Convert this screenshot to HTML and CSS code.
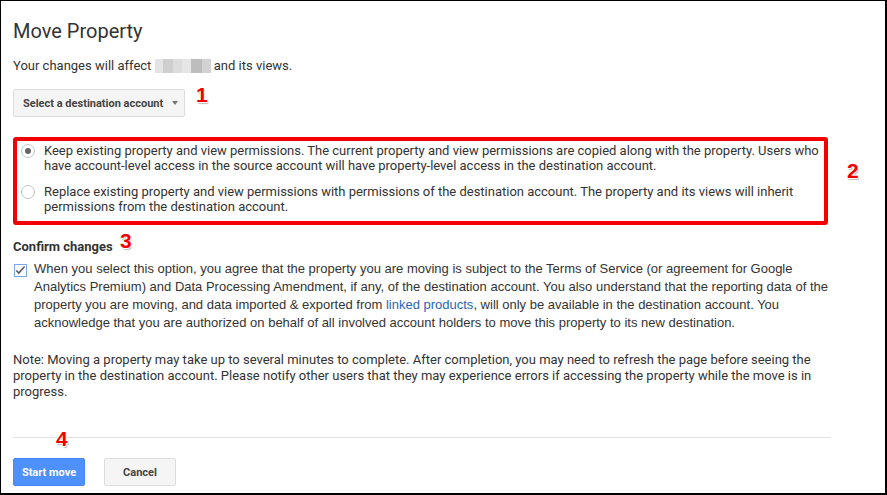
FILE: index.html
```html
<!DOCTYPE html>
<html>
<head>
<meta charset="utf-8">
<link rel="stylesheet" href="styles.css">
</head>
<body>
<div class="frame">
  <h1 class="title">Move Property</h1>
  <p class="affect">Your changes will affect <span class="blur"><i class="b1"></i><i class="b2"></i><i class="b3"></i><i class="b4"></i><i class="b5"></i><i class="b6"></i></span> and its views.</p>
  <div class="select-row">
    <button class="select-btn">Select a destination account <span class="caret"></span></button>
  </div>
  <div class="perm-box">
    <label class="perm-item">
      <span class="radio checked"><span class="dot"></span></span>
      <span class="perm-text">Keep existing property and view permissions. The current property and view permissions are copied along with the property. Users who have account-level access in the source account will have property-level access in the destination account.</span>
    </label>
    <label class="perm-item second">
      <span class="radio"></span>
      <span class="perm-text">Replace existing property and view permissions with permissions of the destination account. The property and its views will inherit permissions from the destination account.</span>
    </label>
  </div>
  <h2 class="confirm-title">Confirm changes</h2>
  <div class="confirm-row">
    <span class="checkbox"><svg width="13" height="13" viewBox="0 0 13 13"><path d="M2.5 6.5 L5.2 9.3 L11.5 2.2" fill="none" stroke="#555" stroke-width="1.6"/></svg></span>
    <p class="confirm-text">When you select this option, you agree that the property you are moving is subject to the Terms of Service (or agreement for Google Analytics Premium) and Data Processing Amendment, if any, of the destination account. You also understand that the reporting data of the property you are moving, and data imported &amp; exported from <a class="link">linked products</a>, will only be available in the destination account. You acknowledge that you are authorized on behalf of all involved account holders to move this property to its new destination.</p>
  </div>
  <p class="note">Note: Moving a property may take up to several minutes to complete. After completion, you may need to refresh the page before seeing the property in the destination account. Please notify other users that they may experience errors if accessing the property while the move is in progress.</p>
  <div class="divider"></div>
  <div class="actions">
    <button class="btn primary">Start move</button>
    <button class="btn secondary">Cancel</button>
  </div>
  <span class="mark m1">1</span>
  <span class="mark m2">2</span>
  <span class="mark m3">3</span>
  <span class="mark m4">4</span>
</div>
</body>
</html>
```

FILE: styles.css
```css
html, body {
  margin: 0;
  padding: 0;
  background: #fff;
}
.frame {
  position: relative;
  width: 887px;
  height: 495px;
  box-sizing: border-box;
  border-left: 1px solid #000;
  border-top: 1px solid #000;
  border-right: 2px solid #000;
  border-bottom: 2px solid #000;
  padding: 18px 0 0 12px;
  font-family: Roboto, "Liberation Sans", sans-serif;
  color: #333;
  overflow: hidden;
}
.title {
  margin: 0;
  font-size: 20px;
  font-weight: 400;
  line-height: 24px;
  color: #333;
}
.affect {
  margin: 15px 0 0;
  font-size: 13px;
  line-height: 16px;
}
.blur {
  display: inline-flex;
  vertical-align: -3px;
  height: 14px;
  width: 56px;
}
.blur i { display: block; height: 14px; }
.b1 { width: 8px; background: #e4e4e4; }
.b2 { width: 10px; background: #cfcfcf; }
.b3 { width: 9px; background: #dcdcdc; }
.b4 { width: 9px; background: #e6e6e6; }
.b5 { width: 11px; background: #bdbdbd; }
.b6 { width: 9px; background: #d2d2d2; }
.select-row {
  margin-top: 15px;
  display: flex;
}
.select-btn {
  height: 28px;
  width: 172px;
  box-sizing: border-box;
  padding: 0 0 0 9px;
  border: 1px solid #dcdcdc;
  border-radius: 2px;
  background: #f5f5f5;
  font-family: Roboto, "Liberation Sans", sans-serif;
  font-size: 11px;
  font-weight: 700;
  color: #444;
  display: flex;
  align-items: center;
  text-align: left;
}
.caret {
  display: inline-block;
  width: 0;
  height: 0;
  margin-left: 9px;
  border-left: 3.5px solid transparent;
  border-right: 3.5px solid transparent;
  border-top: 4px solid #777;
}
.perm-box {
  margin-top: 20px;
  width: 815px;
  box-sizing: border-box;
  border: 4px solid #f40000;
  border-radius: 3px;
  padding: 2px 0 7px 4px;
}
.perm-item {
  display: flex;
  align-items: flex-start;
  font-size: 13px;
  line-height: 15px;
}
.perm-item.second { margin-top: 11px; }
.radio {
  flex: none;
  width: 14px;
  height: 14px;
  box-sizing: border-box;
  border: 1px solid #c4c4c4;
  border-radius: 50%;
  margin: 1px 9px 0 0;
  display: flex;
  align-items: center;
  justify-content: center;
  background: #fff;
}
.dot {
  width: 6px;
  height: 6px;
  border-radius: 50%;
  background: #666;
}
.perm-text { color: #333; letter-spacing: -0.01px; }
.confirm-title {
  margin: 14px 0 0;
  font-size: 13px;
  line-height: 16px;
  font-weight: 700;
  color: #333;
}
.confirm-row {
  margin-top: 5px;
  display: flex;
  align-items: flex-start;
  width: 819px;
}
.checkbox {
  flex: none;
  width: 13px;
  height: 13px;
  box-sizing: border-box;
  border: 1px solid #7aa7e6;
  margin: 4px 7px 0 1px;
  display: flex;
  background: #fff;
}
.checkbox svg { display: block; margin: -1px 0 0 -1px; }
.confirm-text {
  margin: 0;
  font-family: "Liberation Sans", Arial, sans-serif;
  font-size: 13px;
  line-height: 18px;
  color: #333;
}
.link { color: #2a66b8; text-decoration: none; }
.note {
  margin: 20px 0 0;
  width: 819px;
  font-size: 13px;
  line-height: 16px;
  color: #333;
}
.divider {
  margin-top: 37px;
  width: 818px;
  height: 1px;
  background: #e2e2e2;
}
.actions {
  margin-top: 20px;
  display: flex;
  gap: 19px;
}
.btn {
  height: 28px;
  width: 72px;
  box-sizing: border-box;
  border-radius: 2px;
  font-family: Roboto, "Liberation Sans", sans-serif;
  font-size: 11px;
  font-weight: 700;
  padding: 0;
}
.primary {
  background: #4d90fe;
  border: 1px solid #4788f4;
  color: #fff;
}
.secondary {
  background: #f5f5f5;
  border: 1px solid #dcdcdc;
  color: #444;
}
.mark {
  position: absolute;
  font-family: "Liberation Sans", Arial, sans-serif;
  font-weight: 700;
  font-size: 21px;
  line-height: 21px;
  color: #f00000;
  text-shadow: 1px 0 0 #fff, -1px 0 0 #fff, 0 1px 0 #fff, 0 -1px 0 #fff, 1px 2px 1px #bbb;
}
.m1 { left: 195px; top: 83px; }
.m2 { left: 846px; top: 159px; }
.m3 { left: 119px; top: 229px; }
.m4 { left: 55px; top: 427px; }
```
